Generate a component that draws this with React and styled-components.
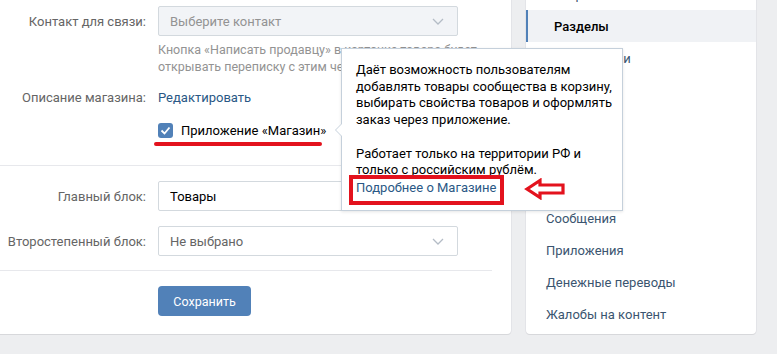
import React from "react";
import styled, { createGlobalStyle } from "styled-components";

const GlobalStyle = createGlobalStyle`
  html, body {
    margin: 0;
    padding: 0;
    background: #edeef0;
    overflow: hidden;
  }
  body {
    font-family: Roboto, "Open Sans", "Liberation Sans", sans-serif;
    font-size: 13px;
    color: #000;
    -webkit-font-smoothing: antialiased;
  }
`;

const Page = styled.div`
  display: flex;
  align-items: flex-start;
  gap: 15px;
  margin-top: -22px;
  width: 777px;
  height: 376px;
`;

const Card = styled.div`
  background: #fff;
  border-radius: 0 0 4px 4px;
  box-shadow: 0 1px 0 0 #d7d8db, 0 0 0 1px #e3e4e8;
  box-sizing: border-box;
`;

const MainCard = styled(Card)`
  width: 511px;
  padding-top: 28px;
  border-radius: 0 0 4px 0;
`;

const Section = styled.div`
  padding: ${(p) => p.pad || "0"};
  border-bottom: ${(p) => (p.divider ? "1px solid #e7e8ec" : "none")};
  margin-right: ${(p) => (p.divider ? "19px" : "0")};
  display: flex;
  flex-direction: column;
  gap: ${(p) => p.gap || "0"};
`;

const Row = styled.div`
  display: flex;
  align-items: center;
  gap: 12px;
  margin-top: ${(p) => p.mt || "0"};
  position: relative;
`;

const Label = styled.div`
  width: 146px;
  flex: 0 0 146px;
  text-align: right;
  color: #656565;
  white-space: nowrap;
`;

const Select = styled.div`
  box-sizing: border-box;
  width: 300px;
  height: 30px;
  border: 1px solid #d3d9de;
  border-radius: 2px;
  background: ${(p) => (p.disabled ? "#f2f4f7" : "#fff")};
  display: flex;
  align-items: center;
  justify-content: space-between;
  padding: 0 13px 0 11px;
  color: ${(p) => p.color || "#000"};
`;

const Chevron = () => (
  <svg width="12" height="7" viewBox="0 0 12 7" fill="none">
    <path d="M1 1l5 5 5-5" stroke="#b4bcc6" strokeWidth="1.3" />
  </svg>
);

const Hint = styled.div`
  margin: 5px 0 0 158px;
  color: #939393;
  font-size: 12.5px;
  line-height: 17px;
  white-space: nowrap;
`;

const Link = styled.a`
  color: #2a5885;
  text-decoration: none;
  line-height: 17px;
`;

const CheckRow = styled.div`
  margin: 16px 0 0 158px;
  display: flex;
  align-items: center;
  gap: 8px;
  position: relative;
  height: 16px;
`;

const Checkbox = styled.span`
  width: 15px;
  height: 15px;
  border-radius: 3px;
  background: #5181b8;
  display: inline-flex;
  align-items: center;
  justify-content: center;
`;

const Underline = styled.span`
  position: absolute;
  left: -4px;
  top: 20px;
  width: 168px;
  height: 3.5px;
  border-radius: 2px;
  background: #e3121d;
`;

const Tooltip = styled.div`
  position: absolute;
  left: 183px;
  top: -74px;
  width: 282px;
  box-sizing: border-box;
  background: #fff;
  border: 1px solid #c5d0db;
  box-shadow: 0 1px 3px rgba(0, 0, 0, 0.1);
  padding: 13px 14px 13px 14px;
  line-height: 16.7px;
  color: #000;
  z-index: 5;
  white-space: nowrap;
  &::before,
  &::after {
    content: "";
    position: absolute;
    top: 74px;
    border: 7px solid transparent;
    border-left: 0;
  }
  &::before {
    left: -7px;
    border-right: 7px solid #c5d0db;
  }
  &::after {
    left: -6px;
    border-right: 7px solid #fff;
  }
`;

const Para = styled.p`
  margin: ${(p) => (p.last ? "0" : "0 0 16.7px")};
`;

const RedBox = styled.span`
  position: absolute;
  left: 7px;
  top: 126px;
  width: 155px;
  height: 30px;
  box-sizing: border-box;
  border: 4px solid #e3121d;
`;

const RedArrow = styled.svg`
  position: absolute;
  left: 182px;
  top: 129px;
`;

const Button = styled.button`
  margin-left: 158px;
  width: 93px;
  height: 30px;
  border: 0;
  border-radius: 4px;
  background: #5181b8;
  color: #fff;
  font-family: inherit;
  font-size: 12.5px;
  padding: 0;
`;

const SideCard = styled(Card)`
  width: 230px;
  padding-bottom: 4px;
`;

const MenuItem = styled.div`
  height: 32px;
  display: flex;
  align-items: center;
  box-sizing: border-box;
  padding-left: ${(p) => (p.active ? "26px" : "20px")};
  background: ${(p) => (p.active ? "#f0f2f5" : "transparent")};
  border-left: ${(p) => (p.active ? "2px solid #5181b8" : "none")};
  color: ${(p) => (p.active ? "#000" : "#3b5570")};
  font-weight: ${(p) => (p.active ? 500 : 400)};
`;

const menu = [
  "Настройки",
  "Разделы",
  "Комментарии",
  "Ссылки",
  "Адреса",
  "Работа с API",
  "Участники",
  "Сообщения",
  "Приложения",
  "Денежные переводы",
  "Жалобы на контент",
];

export default function App() {
  return (
    <>
      <GlobalStyle />
      <Page>
        <MainCard>
          <Section divider pad="0 0 27px 0">
            <Row>
              <Label>Контакт для связи:</Label>
              <Select disabled color="#939393">
                Выберите контакт
                <Chevron />
              </Select>
            </Row>
            <Hint>
              Кнопка «Написать продавцу» в карточке товара будет
              <br />
              открывать переписку с этим человеком.
            </Hint>
            <Row mt="14px">
              <Label>Описание магазина:</Label>
              <Link href="#">Редактировать</Link>
            </Row>
            <CheckRow>
              <Checkbox>
                <svg width="11" height="9" viewBox="0 0 11 9" fill="none">
                  <path d="M1.5 4.5l3 3 5-6" stroke="#fff" strokeWidth="1.8" />
                </svg>
              </Checkbox>
              Приложение «Магазин»
              <Underline />
              <Tooltip>
                <Para>
                  Даёт возможность пользователям
                  <br />
                  добавлять товары сообщества в корзину,
                  <br />
                  выбирать свойства товаров и оформлять
                  <br />
                  заказ через приложение.
                </Para>
                <Para last>
                  Работает только на территории РФ и
                  <br />
                  только с российским рублём.
                  <br />
                  <Link href="#">Подробнее о Магазине</Link>
                </Para>
                <RedBox />
                <RedArrow width="42" height="22" viewBox="0 0 42 22" fill="none">
                  <path
                    d="M3 11L16 2.5V7H39V15H16V19.5Z"
                    stroke="#e3121d"
                    strokeWidth="3.2"
                    strokeLinejoin="miter"
                  />
                </RedArrow>
              </Tooltip>
            </CheckRow>
          </Section>
          <Section divider pad="15px 0 14px 0" gap="15px">
            <Row>
              <Label>Главный блок:</Label>
              <Select>
                Товары
                <Chevron />
              </Select>
            </Row>
            <Row>
              <Label>Второстепенный блок:</Label>
              <Select color="#656565">
                Не выбрано
                <Chevron />
              </Select>
            </Row>
          </Section>
          <Section pad="15px 0 18px 0">
            <Button>Сохранить</Button>
          </Section>
        </MainCard>
        <SideCard>
          {menu.map((item) => (
            <MenuItem key={item} active={item === "Разделы"}>
              {item}
            </MenuItem>
          ))}
        </SideCard>
      </Page>
    </>
  );
}
